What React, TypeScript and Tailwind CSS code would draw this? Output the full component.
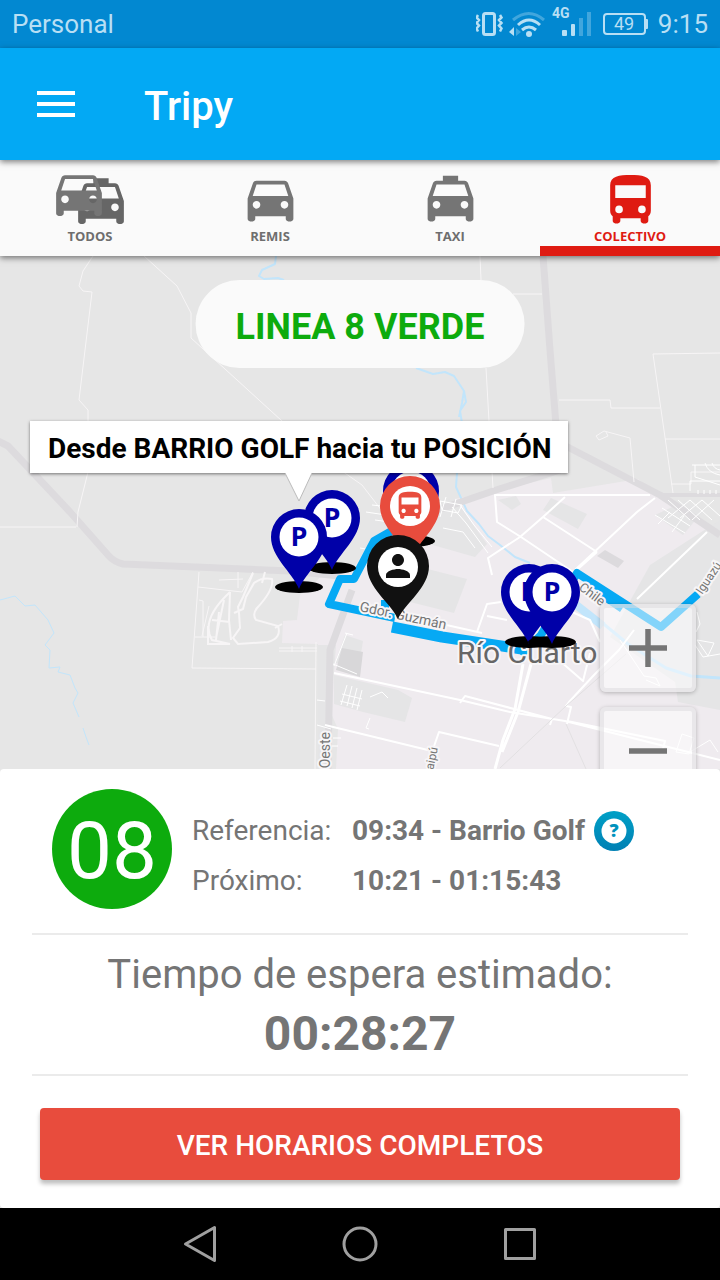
import type { ReactNode } from "react"
import { MdDirectionsBus, MdDirectionsCar, MdLocalTaxi, MdPerson } from "react-icons/md"

function StatusBar() {
    return (
        <div className="flex h-12 items-center justify-between bg-[#0288d1] px-3 text-[26px] text-[#b8dff4]">
            <span>Personal</span>
            <div className="flex items-center gap-[10px]">
                <svg className="h-12 w-[172px]" viewBox="476 0 172 48" fill="none" stroke="#b8dff4">
                    <rect x="483.5" y="13.5" width="11" height="21" rx="2" strokeWidth="3" />
                    <path d="M478 15l-1.500 2.500 2.500 2.500-2.500 3 2.500 2.500-2.500 3 1.500 3M500 15l1.500 2.500-2.500 2.500 2.500 3-2.500 2.500 2.500 3-1.500 3" strokeWidth="2.500" />
                    <path d="M513 20q16-13 31 0" strokeWidth="3" opacity="0.35" />
                    <path d="M518 25q11-10 22 0M522 30q7-6 14 0" strokeWidth="3" />
                    <circle cx="529" cy="34" r="3" fill="#b8dff4" stroke="none" />
                    <path d="M509 32l5-5v9z" fill="#b8dff4" stroke="none" />
                    <path d="M516 28l5 4-5 4z" fill="#b8dff4" stroke="none" opacity="0.35" />
                    <text x="552" y="18" fontSize="14" fontWeight="700" fill="#b8dff4" stroke="none">4G</text>
                    <rect x="562" y="30" width="5" height="6" rx="1" fill="#b8dff4" stroke="none" />
                    <rect x="571" y="24" width="4" height="12" rx="1" fill="#b8dff4" stroke="none" />
                    <path d="M581 18v18M589 12v24" strokeWidth="4" opacity="0.35" />
                    <rect x="604" y="14" width="41" height="20" rx="3" strokeWidth="2" />
                    <rect x="645" y="19" width="3" height="10" rx="1" fill="#b8dff4" stroke="none" />
                    <text x="624" y="30" fontSize="18" textAnchor="middle" fill="#b8dff4" stroke="none">49</text>
                </svg>
                <span>9:15</span>
            </div>
        </div>
    )
}

function Header() {
    return (
        <header className="relative z-20 flex h-28 items-center bg-[#03a9f4] px-[37px] shadow-[0_2px_6px_rgba(0,0,0,0.5)]">
            <button type="button" aria-label="Menú" className="pb-px">
                <svg className="h-[26px] w-[38px]" viewBox="0 0 38 26" stroke="white" strokeWidth="4">
                    <path d="M0 2h38M0 13h38M0 24h38" />
                </svg>
            </button>
            <h1 className="pl-[69px] pt-1.5 text-[40px] font-medium text-white">Tripy</h1>
        </header>
    )
}

function Tab({ label, active, children }: { label: string; active?: boolean; children: ReactNode }) {
    return (
        <button
            type="button"
            className={active
                ? "flex h-24 flex-1 flex-col items-center border-b-10 border-[#df1b12] pt-2 text-[#df1b12]"
                : "flex h-24 flex-1 flex-col items-center border-b-10 border-transparent pt-2 text-[#6e6e6e]"}
        >
            {children}
            <span className="font-['Open_Sans',sans-serif] text-[13px] font-bold leading-[14px]">{label}</span>
        </button>
    )
}

function Tabs() {
    return (
        <nav className="relative z-10 flex bg-[#fafafa] shadow-[0_2px_6px_rgba(0,0,0,0.5)]">
            <Tab label="TODOS">
                <svg className="h-[61px] w-[84px]" viewBox="48 168 84 61">
                    <MdLocalTaxi x="70.500" y="170.500" size={61} color="#666666" />
                    <MdDirectionsCar x="48.500" y="162.500" size={61} color="#757575" />
                </svg>
            </Tab>
            <Tab label="REMIS"><MdDirectionsCar size={61} color="#757575" /></Tab>
            <Tab label="TAXI"><MdLocalTaxi size={61} color="#757575" /></Tab>
            <Tab label="COLECTIVO" active>
                <svg className="size-[61px]" viewBox="0 -0.8 24 24" fill="currentColor">
                    <path fillRule="evenodd" d="M4 16c0 .88.39 1.670 1 2.220V20c0 .55.45 1 1 1h1c.55 0 1-.45 1-1v-1h8v1c0 .55.45 1 1 1h1c.55 0 1-.45 1-1v-1.780c.61-.55 1-1.340 1-2.220V6c0-3.500-3.580-4-8-4s-8 .5-8 4v10zM6 6h12v5H6zM7.500 14a1.500 1.500 0 1 1 0 3 1.500 1.500 0 0 1 0-3zM16.500 14a1.500 1.500 0 1 1 0 3 1.500 1.500 0 0 1 0-3z" />
                </svg>
            </Tab>
        </nav>
    )
}

function Pin({ x, y, color, shadow, children }: { x: number; y: number; color: string; shadow?: boolean; children?: ReactNode }) {
    return (
        <g transform={`translate(${x} ${y})`}>
            {shadow && <ellipse cy="50" rx="24" ry="6" />}
            <path d="M0 52C-7 35-28 20-28 0A28 28 0 0 1 28 0C28 20 7 35 0 52Z" fill={color} />
            <circle r="19.500" fill="white" />
            {children}
        </g>
    )
}

function ParkingPin({ x, y }: { x: number; y: number }) {
    return (
        <Pin x={x} y={y} color="#0000a8" shadow>
            <text y="9" textAnchor="middle" fontFamily="Open Sans, sans-serif" fontSize="27" fontWeight="700" fill="#0000a8">P</text>
        </Pin>
    )
}

function CityMap() {
    return (
        <svg className="absolute inset-0 h-full w-full" viewBox="0 256 720 513" preserveAspectRatio="xMidYMid slice">
            <rect y="256" width="720" height="513" fill="#e6e6e6" />

            {/* urban area */}
            <path d="M297 620l3-25 22-19 30-6 25-38 20-23 80-14 74-17 2 15 85-14 22 18 60 38v234H336l2-40-20-45V644l-36-1 1-22z" fill="#efebef" />
            <g fill="#e5e5e6">
                <path d="M400 562l67 17-13 34-60-15zM498 500l18-4 5 8-9 6zM543 510l8-12 36 16-9 15zM650 565l70-45v190l-42-8-3-20-65-45zM370 515l55-14 30-2 32 45-12 13-60-17-45 8z" />
                <path d="M334 675l64 15 14 8-7 24-42-10-29-8zM318 645h18l-2 28-3 60-13 36zM345 635l18 6-4 25-24-3z" />
                <path d="M655 515l30-14 18 10-20 24z" />
            </g>
            <path d="M342 648l21 4-3 25-24-7z" fill="#d8d7d9" />
            <path d="M597 556l8-6 19 11-6 7z" fill="#dcdadd" />

            {/* rivers */}
            <g fill="none" stroke="#c2e5fb" strokeWidth="2" strokeLinejoin="round">
                <path d="M276 256l-1 8-13 6-3 6 5 3 14-1 6 2M416 368l17 6 12-2 9 4 10 15 2 11-6 9 2 12M464 391l-2 12-3 14M457 473l-1 14 11 24 12 13 9 12 12 9 15 12 15 6" />
                <path d="M0 600l15-4 10 10 10-1 13 15 6 13-9 12 5 5-1 18 11-1-2 5 12 3 5 13 3 5-5 10 6 14M83 728l3 9 3 8" strokeWidth="1" />
                <path d="M575 604l25 17 28 23 38 24 25 8 29 2" strokeWidth="3" />
                <path d="M575 604l28 22" strokeWidth="8" />
            </g>

            {/* highways */}
            <g fill="none" stroke="#dddbde" strokeWidth="7" strokeLinejoin="round">
                <path d="M-4 440l12 6 62 66 38 43q6 7 15 9l167 7 50 5M543 256l7 94 6 75 4 18 100 52 60 40M560 470l-64 20-70 24M352 590l-22 60-2 119" />
                <path d="M659 495h61" strokeWidth="4" />
            </g>

            {/* rural roads */}
            <g fill="none" stroke="#f7f5f6" strokeWidth="1">
                <path d="M93 256l-10 15-4 15 4 5 9 1-13 108 9 10v62l-10 40-1 15M0 527h76M144 256l33 30 14 27v25l91 83 60 50 20 14 20 26" />
                <path d="M480 256l1 24M486 368l3 53 4 67M513 294h29M653 354l67-1M653 354l20 139M559 400h51l1 8h49M665 439h55M671 484h20v-12h29M596 436l8-5 26 7 4 44M596 436l3 4 9-4-2-4" />
                <path d="M199 572l-7 96 124 1M316 642l-1 127M198 587l44 5 11-20M219 580l24-1M238 572v16M199 600l4 1v36M195 637h20M209 606l-7 30" />
                <path d="M230 592q-30 28-18 48l18 4-22 0v-18M230 592l-1 28 2 20M212 620l18 2M219 612l-3 28M224 600l-8 38M265 572l-3 11M253 573l-10 24-5 10 1 6 1 15-7 10 5 6 30-2q14-4 10-16l-22-6q-4-6 1-12 17-18 15-29-10-2-18 4l-8 14-3 12-9 4M275 628l7-4" strokeWidth="2" />
                <path d="M279 648h38M279 651h38M292 646v6M302 646v6" strokeWidth="1" />
            </g>

            {/* streets */}
            <g fill="none" stroke="#ffffff" strokeLinejoin="round">
                <path d="M650 495H495l2 27 24 15 52 35M543 517l54 35M637 512l-62 58M707 532l-70 67M655 498L637 512M565 497l-22 20-23 20-32 21 4 17M597 552l-19 17" strokeWidth="2" />
                <path d="M523 664l-8 45-12 31-8 29M531 664l-13 48-16 40" strokeWidth="3" />
                <path d="M334 673l126 27 50 12 55 9 155 39M460 703l5-7 87 23-2 6M567 724l4-17-5-1 3-4 25-27 25-25 15-20M567 721l98 20-2 8M325 725l111 27M432 752l7-20 60 14M540 655l20 6 23 20 7-28M477 632l10-28 14-2M487 616l20 4M545 600l45 20 10 22M442 624l40 9" strokeWidth="2" />
                <path d="M317 700l8 1M317 725l14 4M334 666l13-33M345 633l8 2M333 664l24 10" strokeWidth="1" />
                <path d="M347 685l-6 20M352 686l-5 20M357 688l-5 20M362 690l-5 20M342 694l20 5M340 701l20 5M370 697l12-5 6 6M370 718l-4 10 3 1M333 738h8M332 746h6" strokeWidth="1" />
                <path d="M372 505l18 2 40-6M375 520l15 2M366 512l20 3M440 501l22 4-4 8-16-3zM446 497l-6 20M456 499l-5 18M443 528l20 4 12 16M452 507l14 16 22 30M460 505l14 20 18 22M360 548l12 2" strokeWidth="1" />
                <path d="M692 465h28M695 465v12l25 8M705 463q3 10 15 12M712 463q2 6 8 7M690 491v-10h30M698 490v4M704 490v4M710 490v4M716 490v4" strokeWidth="1" />
                <path d="M668 500l22 20M678 500l22 20M690 500l22 20M702 500l18 16M690 500l-22 18M702 500l-22 18M714 500l-22 20M655 515l30 18M662 508l28 18M670 512l-12 12M684 516l-12 16" strokeWidth="1" />
                <path d="M695 645l8 12 17-3M697 640l17 3-6 13zM697 612l3 12-4 8M676 752l6-18 12 4-5 16zM690 752l20-12 8 12M620 640l24 36 12 2 4 8-14-6" strokeWidth="1" />
            </g>
            <path d="M500 768l66-62 60-52M566 724l20 45" fill="none" stroke="#e2e0e2" strokeWidth="1" />

            {/* route */}
            <g fill="none" stroke="#06a9f4" strokeLinejoin="round" strokeWidth="8">
                <path d="M402 525l-28 16-20 38h-14l-11 25 66 14M385 600v18M521 655l20-20 36-62 84 54 37-33" />
                <path d="M392 627l50 10 80 12" strokeWidth="11" />
                <path d="M597 592l25 17" strokeWidth="7" />
                <path d="M715 572l5-5" strokeWidth="6" />
            </g>

            {/* place names */}
            <g fill="#757575" stroke="#f7f5f7" strokeWidth="4" strokeLinejoin="round" paintOrder="stroke" fontFamily="Roboto, sans-serif" fontSize="14">
                <text transform="translate(359 611) rotate(12)">Gdor. Guzmán</text>
                <text transform="translate(578 589) rotate(37)" fontSize="13">Chile</text>
                <text transform="translate(702 595) rotate(-56)" fontSize="12">Iguazú</text>
                <text transform="translate(330 732) rotate(-90)" textAnchor="end">a Oeste</text>
                <text transform="translate(438 748) rotate(-78)" textAnchor="end" fontSize="12">aipú</text>
                <text x="457" y="663" fontSize="30" fill="#666666">Río Cuarto</text>
            </g>

            <ParkingPin x={332} y={518} />
            <ParkingPin x={299} y={537} />
            <ParkingPin x={411} y={491} />
            <g transform="translate(410 506)">
                <path d="M0 54C-7 37-30 21-30 0A30 30 0 0 1 30 0C30 21 7 37 0 54Z" fill="#e84c3d" />
                <circle r="20" fill="white" />
                <MdDirectionsBus x="-17" y="-17" size={34} color="#e84c3d" />
            </g>
            <g transform="translate(398 567)">
                <path d="M0 52C-7 36-31 21-31-1A31 31 0 0 1 31-1C31 21 7 36 0 52Z" fill="#111111" />
                <circle r="20" fill="white" />
                <MdPerson x="-18" y="-19" size={36} color="#111111" />
            </g>
            <ParkingPin x={529} y={592} />
            <ParkingPin x={552} y={592} />
        </svg>
    )
}

function ZoomButton({ label, d }: { label: string; d: string }) {
    return (
        <button
            type="button"
            aria-label={label}
            className="flex h-22 w-24 items-center justify-center rounded-md border-4 border-[#dcdadd]/50 bg-white/50 shadow-[0_1px_4px_rgba(0,0,0,0.25)]"
        >
            <svg className="h-[38px] w-[38px]" viewBox="0 0 38 38" stroke="#757575" strokeWidth="5.500">
                <path d={d} />
            </svg>
        </button>
    )
}

function MapSection() {
    return (
        <section className="relative min-h-[480px] flex-1 overflow-hidden">
            <CityMap />
            <h2 className="absolute left-1/2 top-6 flex h-22 -translate-x-1/2 items-center whitespace-nowrap rounded-full bg-[#fafafa] px-10 pt-1.5 text-4xl font-bold text-[#0dab0d]">
                LINEA 8 VERDE
            </h2>
            <div className="absolute left-[30px] top-[165px]">
                <p className="whitespace-nowrap bg-white pl-[18px] pr-4 pt-1 text-[28px] font-bold leading-[48px] text-black shadow-[0_1px_3px_rgba(0,0,0,0.5)]">
                    Desde BARRIO GOLF hacia tu POSICIÓN
                </p>
                <svg className="mx-auto h-7 w-[27px]" viewBox="0 0 27 28">
                    <path d="M0 0h27L14 28z" fill="white" />
                    <path d="M0 0l14 28L27 0" fill="none" stroke="#bbbbbb" strokeWidth="1" />
                </svg>
            </div>
            <div className="absolute right-6 top-[348px] flex flex-col gap-[15px]">
                <ZoomButton label="Acercar" d="M0 19h38M19 0v38" />
                <ZoomButton label="Alejar" d="M0 19h38" />
            </div>
        </section>
    )
}

function LinePanel() {
    return (
        <section className="rounded bg-white px-8 pb-7 pt-5 text-[#757575]">
            <div className="flex gap-5 border-b-2 border-[#ebebeb] pb-6 pl-5">
                <div className="flex size-30 items-center justify-center rounded-full bg-[#0dab0d] pt-1 text-[80px] leading-none text-white">08</div>
                <dl className="grid grid-cols-[160px_1fr] content-start pt-[17px] text-[28px] leading-[50px]">
                    <dt>Referencia:</dt>
                    <dd className="flex h-[50px] items-center gap-[9px] font-bold">
                        09:34 - Barrio Golf
                        <button type="button" aria-label="Ayuda">
                            <svg className="size-10" viewBox="0 0 40 40">
                                <defs>
                                    <linearGradient id="help" x1="0" y1="0" x2="0" y2="1">
                                        <stop offset="0" stopColor="#00a0c6" />
                                        <stop offset="1" stopColor="#0080b4" />
                                    </linearGradient>
                                </defs>
                                <circle cx="20" cy="20" r="20" fill="url(#help)" />
                                <circle cx="20" cy="20" r="12.500" fill="white" />
                                <text x="20" y="26" textAnchor="middle" fontFamily="Open Sans, sans-serif" fontSize="18" fontWeight="800" fill="#0092bd">?</text>
                            </svg>
                        </button>
                    </dd>
                    <dt>Próximo:</dt>
                    <dd className="font-bold">10:21 - 01:15:43</dd>
                </dl>
            </div>
            <div className="border-b-2 border-[#ebebeb] pb-[11px] pt-[10px] text-center">
                <p className="text-[40px] leading-[60px]">Tiempo de espera estimado:</p>
                <p className="text-5xl font-bold leading-[58px]">00:28:27</p>
            </div>
            <div className="px-2 pt-8">
                <button type="button" className="h-18 w-full rounded bg-[#e84c3d] pt-1 text-[28px] font-medium text-white shadow-[0_4px_4px_rgba(0,0,0,0.25)]">
                    VER HORARIOS COMPLETOS
                </button>
            </div>
        </section>
    )
}

function NavigationBar() {
    return (
        <nav className="flex h-18 justify-center bg-black">
            <button type="button" aria-label="Atrás" className="flex w-40 items-center justify-center">
                <svg className="size-10" viewBox="0 0 40 40" fill="none" stroke="#a0a0a0" strokeWidth="3" strokeLinejoin="round">
                    <path d="M34.500 3.500v33L5.500 20z" />
                </svg>
            </button>
            <button type="button" aria-label="Inicio" className="flex w-40 items-center justify-center">
                <svg className="size-10" viewBox="0 0 40 40" fill="none" stroke="#a0a0a0" strokeWidth="3">
                    <circle cx="20" cy="20" r="16" />
                </svg>
            </button>
            <button type="button" aria-label="Recientes" className="flex w-40 items-center justify-center">
                <svg className="size-10" viewBox="0 0 40 40" fill="none" stroke="#a0a0a0" strokeWidth="3" strokeLinejoin="round">
                    <rect x="5.500" y="5.500" width="29" height="29" />
                </svg>
            </button>
        </nav>
    )
}

function App() {
    return (
        <main className="flex min-h-screen flex-col bg-[#e6e6e6] font-[Roboto,sans-serif]">
            <StatusBar />
            <Header />
            <Tabs />
            <MapSection />
            <LinePanel />
            <NavigationBar />
        </main>
    )
}

export default App
